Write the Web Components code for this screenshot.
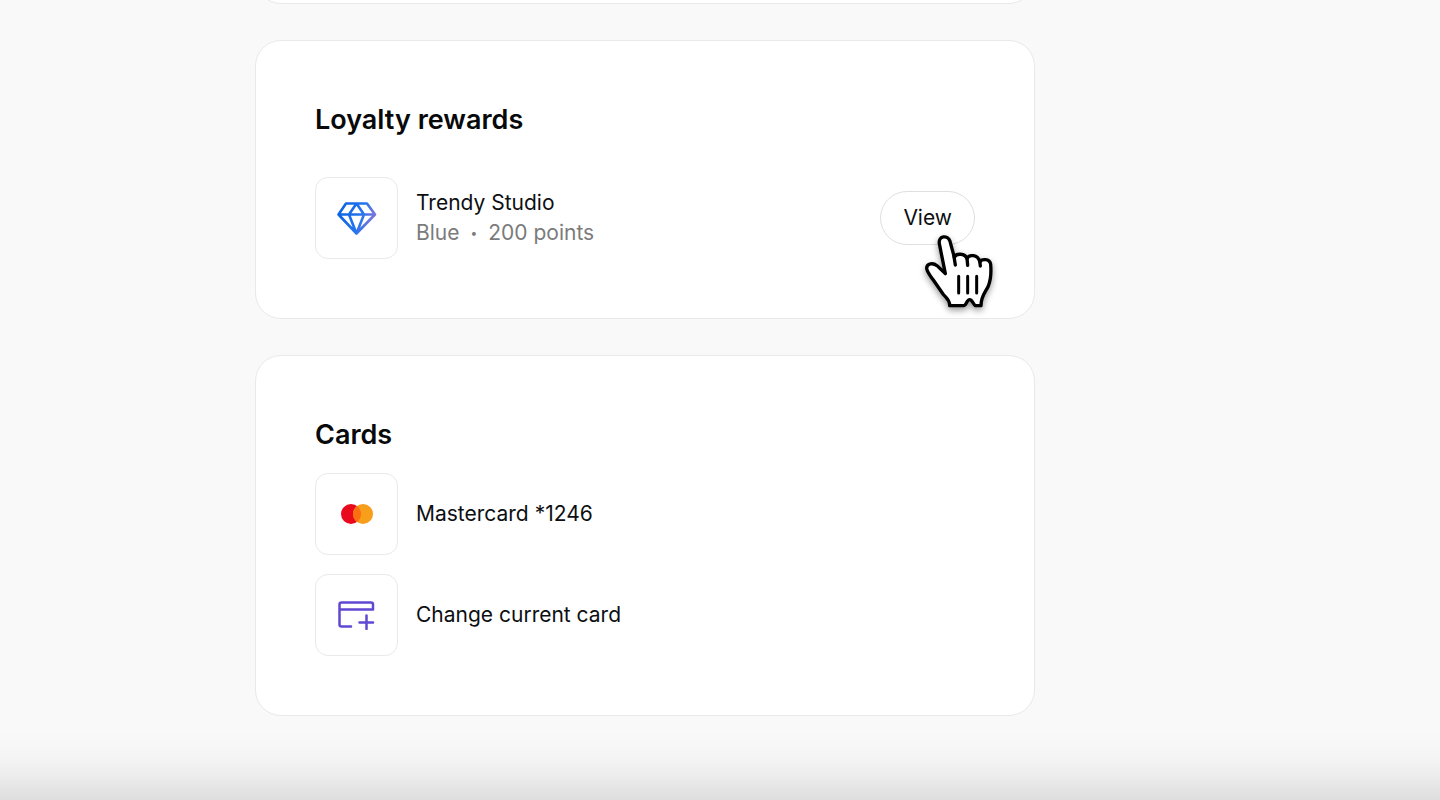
<!DOCTYPE html>
<html lang="en">
<head>
<meta charset="utf-8">
<meta name="viewport" content="width=device-width, initial-scale=1">
<title>Loyalty rewards</title>
<style>
    body{
        margin: 0;
        background-color: #f9f9f9;
        font-family: Inter, "Liberation Sans", sans-serif;
        color: #0d0f12;
    }
    .points{
        display: flex;
        gap: 11px;
    }
    .dot{
        font-size: 12px;
    }
</style>
</head>
<body>
<account-page>
    <panel-card></panel-card>
    <panel-card heading="Loyalty rewards" class="spacious">
        <item-row name="Trendy Studio">
            <gem-icon slot="icon"></gem-icon>
            <div slot="detail" class="points">
                <span>Blue</span><span class="dot">•</span><span>200 points</span>
            </div>
            <view-button slot="action">View</view-button>
        </item-row>
    </panel-card>
    <panel-card heading="Cards">
        <item-row name="Mastercard *1246">
            <mastercard-icon slot="icon"></mastercard-icon>
        </item-row>
        <item-row name="Change current card" href="#change-card">
            <add-card-icon slot="icon"></add-card-icon>
        </item-row>
    </panel-card>
</account-page>

<script>
class AccountPage extends HTMLElement{
    constructor(){
        super();
        this.shadowDOM = this.attachShadow({mode:'open'});
    }

    connectedCallback(){
        this.shadowDOM.innerHTML = `
        <style>
            :host{
                display: block;
                position: relative;
                min-height: 100vh;
                overflow: hidden;
            }
            main{
                display: grid;
                grid-template-columns: 17fr minmax(0, 780px) 27fr;
                row-gap: 36px;
                margin-top: -116px;
                padding-bottom: 84px;
            }
            ::slotted(*){
                grid-column: 2;
            }
            .fade{
                position: absolute;
                left: 0;
                right: 0;
                bottom: 0;
                height: 72px;
                background: linear-gradient(rgba(0,0,0,0), rgba(0,0,0,.015) 40%, rgba(0,0,0,.05) 66%, rgba(0,0,0,.11));
                pointer-events: none;
            }
            @media only screen and (max-width: 768px){
                main{
                    grid-template-columns: 0 1fr 0;
                }
            }
        </style>
        <main><slot></slot></main>
        <div class="fade"></div>
        `
    }
}

class PanelCard extends HTMLElement{
    constructor(){
        super();
        this.shadowDOM = this.attachShadow({mode:'open'});
    }

    connectedCallback(){
        const heading = this.getAttribute('heading');
        this.shadowDOM.innerHTML = `
        <style>
            :host{
                display: block;
                box-sizing: border-box;
                padding: 59px;
                background-color: white;
                border: 1px solid #e9e9e9;
                border-radius: 26px;
            }
            h2{
                margin: 0 0 18px;
                font-size: 27px;
                line-height: 40px;
                font-weight: 600;
                color: #08090a;
            }
            :host(.spacious) h2{
                margin-bottom: 37px;
            }
            .items{
                display: flex;
                flex-direction: column;
                gap: 19px;
            }
            @media only screen and (max-width: 768px){
                :host{
                    padding: 24px;
                }
            }
        </style>
        ${heading ? `<h2>${heading}</h2>` : ''}
        <div class="items"><slot></slot></div>
        `
    }
}

class ItemRow extends HTMLElement{
    constructor(){
        super();
        this.shadowDOM = this.attachShadow({mode:'open'});
    }

    connectedCallback(){
        const name = this.getAttribute('name');
        const href = this.getAttribute('href');
        this.shadowDOM.innerHTML = `
        <style>
            :host{
                display: flex;
                align-items: center;
                gap: 18px;
                font-size: 21px;
                line-height: 30px;
            }
            .tile{
                display: flex;
                align-items: center;
                justify-content: center;
                box-sizing: border-box;
                width: 83px;
                height: 82px;
                flex: none;
                border: 1px solid #e9e9e9;
                border-radius: 13px;
            }
            .text{
                flex: 1;
            }
            .detail{
                color: #7b7b7b;
            }
            a{
                color: inherit;
                text-decoration: none;
            }
        </style>
        <div class="tile"><slot name="icon"></slot></div>
        <div class="text">
            <div>${href ? `<a href="${href}">${name}</a>` : name}</div>
            <div class="detail"><slot name="detail"></slot></div>
        </div>
        <slot name="action"></slot>
        `
    }
}

class ViewButton extends HTMLElement{
    constructor(){
        super();
        this.shadowDOM = this.attachShadow({mode:'open'});
    }

    connectedCallback(){
        this.shadowDOM.innerHTML = `
        <style>
            :host{
                display: block;
                position: relative;
            }
            button{
                display: block;
                padding: 11px 22px;
                font: inherit;
                color: inherit;
                background-color: white;
                border: 1px solid #dfdfdf;
                border-radius: 27px;
                cursor: pointer;
            }
            svg{
                position: absolute;
                right: -23px;
                top: 39px;
                overflow: visible;
                pointer-events: none;
                filter: drop-shadow(0 3px 3px rgba(0,0,0,.4));
            }
        </style>
        <button type="button"><slot></slot></button>
        <svg width="80" height="84" viewBox="0 0 240 252" fill="white" stroke="black" stroke-width="10" stroke-linecap="round" stroke-linejoin="round" aria-hidden="true">
            <path d="M82 131 L64 41 C60 16 90 14 96 34 L109 82 C114 69 141 69 147 86 C153 72 179 73 186 96 C190 87 215 84 218 103 C220 128 219 148 211 168 C202 188 189 197 189 227 H172 C166 225 164 209 155 209 C146 209 145 227 137 227 H95 C96 209 84 204 75 192 L46 150 C36 136 26 125 26 115 C26 99 46 98 57 107 Z"/>
            <path d="M108 80 L112 105 M147 84 L149 106 M185 92 L187 108" fill="none"/>
            <path d="M122 139 V189 M149 139 V189 M176 139 V189" fill="none" stroke-width="9"/>
        </svg>
        `
    }
}

class GemIcon extends HTMLElement{
    constructor(){
        super();
        this.shadowDOM = this.attachShadow({mode:'open'});
    }

    connectedCallback(){
        this.shadowDOM.innerHTML = `
        <style>
            :host, svg{
                display: block;
            }
        </style>
        <svg width="40" height="34" viewBox="0 0 40 34" fill="none" stroke="url(#tint)" stroke-width="2.6" stroke-linejoin="round" aria-hidden="true">
            <linearGradient id="tint" gradientUnits="userSpaceOnUse" x1="8" y1="4" x2="40" y2="16">
                <stop offset="0" stop-color="#0f66e4"/>
                <stop offset=".55" stop-color="#2475ee"/>
                <stop offset="1" stop-color="#9273d8"/>
            </linearGradient>
            <path d="M9 2.500 H30 L38 13.500 L19.500 32.500 L1.500 13.500 Z M1.500 13.500 H38 M19.500 2.500 L12 13.500 L19.500 32.500 L27 13.500 Z"/>
        </svg>
        `
    }
}

class MastercardIcon extends HTMLElement{
    constructor(){
        super();
        this.shadowDOM = this.attachShadow({mode:'open'});
    }

    connectedCallback(){
        this.shadowDOM.innerHTML = `
        <style>
            :host, svg{
                display: block;
            }
        </style>
        <svg width="32" height="20" viewBox="0 0 32 20" aria-hidden="true">
            <circle cx="10" cy="10" r="10" fill="#e9091c"/>
            <circle cx="22" cy="10" r="10" fill="#f79e1b"/>
            <path d="M16 2 A10 10 0 0 1 16 18 A10 10 0 0 1 16 2 Z" fill="#fb6e12"/>
        </svg>
        `
    }
}

class AddCardIcon extends HTMLElement{
    constructor(){
        super();
        this.shadowDOM = this.attachShadow({mode:'open'});
    }

    connectedCallback(){
        this.shadowDOM.innerHTML = `
        <style>
            :host, svg{
                display: block;
            }
        </style>
        <svg width="38" height="30" viewBox="0 0 38 30" fill="none" stroke="#6048d2" stroke-width="2.5" stroke-linecap="round" stroke-linejoin="round" aria-hidden="true">
            <path d="M13 26.500 H3.500 Q1.500 26.500 1.500 24.500 V4.500 Q1.500 2.500 3.500 2.500 H33 Q35 2.500 35 4.500 V9.500 H1.500 M28.500 15.500 V29 M21.500 22.500 H35"/>
        </svg>
        `
    }
}

customElements.define('account-page',AccountPage)
customElements.define('panel-card',PanelCard)
customElements.define('item-row',ItemRow)
customElements.define('view-button',ViewButton)
customElements.define('gem-icon',GemIcon)
customElements.define('mastercard-icon',MastercardIcon)
customElements.define('add-card-icon',AddCardIcon)
</script>
</body>
</html>
